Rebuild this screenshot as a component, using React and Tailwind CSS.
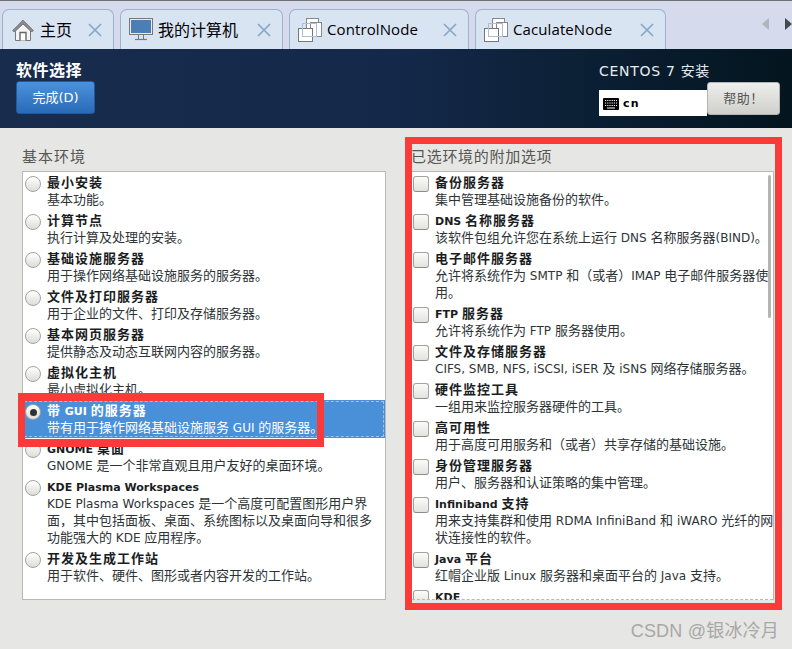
const envs = [
  { title: '最小安装', desc: ['基本功能。'] },
  { title: '计算节点', desc: ['执行计算及处理的安装。'] },
  { title: '基础设施服务器', desc: ['用于操作网络基础设施服务的服务器。'] },
  { title: '文件及打印服务器', desc: ['用于企业的文件、打印及存储服务器。'] },
  { title: '基本网页服务器', desc: ['提供静态及动态互联网内容的服务器。'] },
  { title: '虚拟化主机', desc: ['最小虚拟化主机。'] },
  { title: '带 GUI 的服务器', desc: ['带有用于操作网络基础设施服务 GUI 的服务器。'], selected: true },
  { title: 'GNOME 桌面', desc: ['GNOME 是一个非常直观且用户友好的桌面环境。'] },
  {
    title: 'KDE Plasma Workspaces',
    desc: ['KDE Plasma Workspaces 是一个高度可配置图形用户界', '面，其中包括面板、桌面、系统图标以及桌面向导和很多', '功能强大的 KDE 应用程序。'],
  },
  { title: '开发及生成工作站', desc: ['用于软件、硬件、图形或者内容开发的工作站。'] },
];

const addons = [
  { title: '备份服务器', desc: ['集中管理基础设施备份的软件。'] },
  { title: 'DNS 名称服务器', desc: ['该软件包组允许您在系统上运行 DNS 名称服务器(BIND)。'] },
  { title: '电子邮件服务器', desc: ['允许将系统作为 SMTP 和（或者）IMAP 电子邮件服务器使', '用。'] },
  { title: 'FTP 服务器', desc: ['允许将系统作为 FTP 服务器使用。'] },
  { title: '文件及存储服务器', desc: ['CIFS, SMB, NFS, iSCSI, iSER 及 iSNS 网络存储服务器。'] },
  { title: '硬件监控工具', desc: ['一组用来监控服务器硬件的工具。'] },
  { title: '高可用性', desc: ['用于高度可用服务和（或者）共享存储的基础设施。'] },
  { title: '身份管理服务器', desc: ['用户、服务器和认证策略的集中管理。'] },
  { title: 'Infiniband 支持', desc: ['用来支持集群和使用 RDMA InfiniBand 和 iWARO 光纤的网', '状连接性的软件。'] },
  { title: 'Java 平台', desc: ['红帽企业版 Linux 服务器和桌面平台的 Java 支持。'] },
  { title: 'KDE', desc: [] },
];

// latin runs are set smaller than the CJK around them
function Mixed({ text, latinClass }) {
  return text.split(/([\x20-\x7e]+)/).map((part, i) =>
    i % 2 ? (
      <span key={i} className={latinClass}>
        {part}
      </span>
    ) : (
      part
    ),
  );
}

function HomeIcon() {
  return (
    <svg width="24" height="24" viewBox="0 0 24 24">
      <path d="M1.500 12.500 12 2l10.500 10.500-1.500 1.500L12 5 3 14z" fill="#8a8a8a" stroke="#666" strokeWidth="0.6" />
      <path d="M4.500 13 12 6l7.500 7v9.500h-15z" fill="#f4f4f4" stroke="#777" strokeWidth="1" />
      <path d="M9 22.500V14.500h6v8" fill="#fff" stroke="#666" strokeWidth="1.400" />
    </svg>
  );
}

function MonitorIcon() {
  return (
    <svg width="24" height="24" viewBox="0 0 24 24">
      <rect x="0.500" y="0.500" width="23" height="16" fill="#e8ecf2" stroke="#777" />
      <rect x="2" y="2" width="20" height="13" fill="#4a7fb5" />
      <path d="M9.500 17v4M14.500 17v4" stroke="#777" strokeWidth="1" />
      <path d="M6 21.500h12" stroke="#777" strokeWidth="1.200" />
    </svg>
  );
}

function NodeIcon() {
  return (
    <svg width="24" height="24" viewBox="0 0 24 24">
      <rect x="8.500" y="0.500" width="12" height="12" fill="#fff" stroke="#888" />
      <rect x="12.500" y="4.500" width="11" height="14" fill="#fff" stroke="#888" />
      <rect x="0.500" y="10.500" width="14" height="13" fill="#fff" stroke="#777" />
      <rect x="4.500" y="5.500" width="14" height="13" fill="none" stroke="#a9c0d8" />
    </svg>
  );
}

function CloseX() {
  return (
    <svg width="14" height="14" viewBox="0 0 14 14" className="shrink-0">
      <path d="M1 1l12 12M13 1 1 13" stroke="#87a7c9" strokeWidth="1.700" />
    </svg>
  );
}

function KeyboardIcon() {
  return (
    <svg width="16" height="12" viewBox="0 0 16 12">
      <rect width="16" height="12" rx="1" fill="#000" />
      <path d="M2 2.500h12M2 5h12M2 7.500h12" stroke="#fff" strokeWidth="1" strokeDasharray="1.200 1" />
      <path d="M4 10h8" stroke="#fff" strokeWidth="1" />
    </svg>
  );
}

function Tab({ icon, label, width, latin }) {
  return (
    <div
      className={`${width} h-10 pl-[8px] pr-[11px] flex items-center justify-between rounded-t-[7px] border border-b-0 border-[#9db2cc] bg-[#d9e4f3]`}
    >
      <div className="flex items-center gap-[5px]">
        {icon}
        <span className={latin ? 'text-black text-[15px] tracking-[0.1px]' : 'text-black text-[16px]'}>{label}</span>
      </div>
      <CloseX />
    </div>
  );
}

function Radio({ checked }) {
  return (
    <span className="mt-[2px] w-4 h-4 shrink-0 rounded-full border border-[#a3a3a0] bg-gradient-to-b from-[#ffffff] to-[#dcdcd8] flex items-center justify-center">
      {checked && <span className="w-[7px] h-[7px] rounded-full bg-[#2e3436]" />}
    </span>
  );
}

function Checkbox() {
  return <span className="mt-[2px] w-4 h-4 shrink-0 rounded-[3px] border border-[#a3a3a0] border-b-[#8c8c88] bg-gradient-to-b from-[#fbfbfa] to-[#e2e2de]" />;
}

function Row({ item, control, inset }) {
  const selected = item.selected;
  return (
    <div className={`flex gap-[6px] pt-[2px] pb-[2px] ${inset} ${selected ? 'bg-[#4a90d9] text-white outline-1 -outline-offset-2 outline-dashed outline-[#9cc4ee]' : 'text-[#2e3436]'}`}>
      {control}
      <div className="min-w-0">
        <div className={`h-[17px] leading-[17px] text-[13px] font-bold tracking-[1px] whitespace-nowrap ${selected ? 'text-white' : 'text-[#1a1d1e]'}`}>
          <Mixed text={item.title} latinClass="text-[11px] tracking-normal" />
        </div>
        {item.desc.map((line) => (
          <div key={line} className="h-[17px] leading-[17px] text-[13px] whitespace-nowrap">
            <Mixed text={line} latinClass="text-[12px]" />
          </div>
        ))}
      </div>
    </div>
  );
}

export default function App() {
  return (
    <div className="relative w-[792px] h-[649px] overflow-hidden bg-[#e6e6e4] border-t border-[#6f6f6f] font-['DejaVu_Sans','Noto_Sans_CJK_SC',sans-serif]">
      {/* tab strip */}
      <div className="h-[48px] bg-[#d5dbec] flex items-end pl-[2px] relative font-['Open_Sans','Noto_Sans_CJK_SC',sans-serif]">
        <div className="flex gap-[6px]">
          <Tab icon={<HomeIcon />} label="主页" width="w-[112px]" />
          <Tab icon={<MonitorIcon />} label="我的计算机" width="w-[163px]" />
          <Tab icon={<NodeIcon />} label="ControlNode" width="w-[180px]" latin />
          <Tab icon={<NodeIcon />} label="CaculateNode" width="w-[191px]" latin />
        </div>
        <div className="absolute right-0 top-[17px] flex gap-[16px]">
          <span className="w-0 h-0 border-y-[6px] border-y-transparent border-r-[7px] border-r-[#b0b4bf]" />
          <span className="w-0 h-0 border-y-[6px] border-y-transparent border-l-[7px] border-l-[#44494f]" />
        </div>
      </div>

      {/* header */}
      <div className="h-[79px] flex justify-between pl-4 pr-[12px] bg-gradient-to-r from-[#182c4e] via-[#14294a] to-[#04151f]">
        <div>
          <div className="mt-[12px] h-[20px] leading-[20px] text-[16px] font-bold tracking-[0.5px] text-white">软件选择</div>
          <button className="w-[79px] h-[33px] rounded-[3px] border border-[#1f5a9c] bg-gradient-to-b from-[#4b92dc] to-[#2a6ab8] text-white text-[13px]">
            完成(D)
          </button>
        </div>
        <div className="relative w-[181px]">
          <div className="mt-[13px] h-[18px] leading-[18px] text-[14px] text-[#e8ebee] tracking-[0.7px] font-normal">CENTOS 7 安装</div>
          <div className="mt-[10px] w-[108px] h-[26px] bg-white flex items-center gap-[4px] pl-[4px] pt-[2px] text-[11px] font-bold tracking-[1.300px] text-black">
            <KeyboardIcon />
            cn
          </div>
          <button className="absolute right-0 top-[33px] w-[73px] h-[33px] rounded-[3px] border border-[#b4b4b0] bg-gradient-to-b from-[#eeeeec] to-[#cfcfcb] text-[#555753] text-[13px] tracking-[0.5px]">
            帮助！
          </button>
        </div>
      </div>

      {/* content */}
      <div className="flex pl-[22px] pt-[18px]">
        <div className="w-[364px]">
          <div className="h-[25px] pt-px leading-[20px] text-[15px] text-[#555753] tracking-[1px]">基本环境</div>
          <div className="h-[429px] border border-[#b8b8b4] bg-white overflow-hidden">
            {envs.map((item) => (
              <Row key={item.title} item={item} inset="pl-[2px]" control={<Radio checked={item.selected} />} />
            ))}
          </div>
        </div>
        <div className="w-[363px] ml-[25px]">
          <div className="h-[25px] pt-px leading-[20px] text-[15px] text-[#555753] tracking-[0.7px]">已选环境的附加选项</div>
          <div className="relative h-[429px] border-x border-t border-[#b8b8b4] bg-white overflow-hidden">
            {addons.map((item) => (
              <Row key={item.title} item={item} inset="pl-px" control={<Checkbox />} />
            ))}
            <span className="absolute right-[2px] top-[3px] w-[3px] h-[143px] rounded-full bg-[#b4b4b0]" />
            <span className="absolute left-0 right-0 bottom-0 border-b border-dashed border-[#b8b8b4]" />
          </div>
        </div>
      </div>

      {/* annotation boxes */}
      <div className="absolute left-[18px] top-[392px] w-[306px] h-[54px] border-x-[7px] border-y-[8px] border-[#fb3a3a]" />
      <div className="absolute left-[405px] top-[136px] w-[377px] h-[473px] border-[7px] border-[#fb3a3a]" />

      {/* watermark */}
      <div className="absolute right-[13px] top-[618px] text-[18px] leading-[24px] tracking-[0.2px] text-[#a8a8a6] font-['Liberation_Sans','Noto_Sans_CJK_SC',sans-serif]">CSDN @银冰冷月</div>
    </div>
  );
}
